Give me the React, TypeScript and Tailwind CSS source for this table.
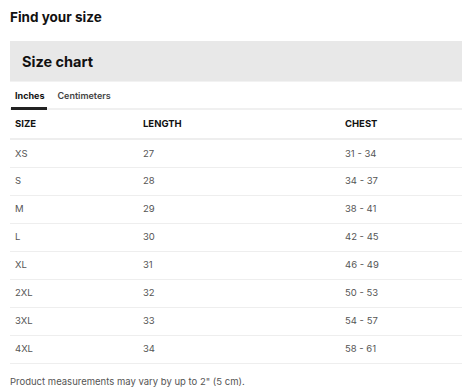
const rows = [
    ['XS', '27', '31 - 34'],
    ['S', '28', '34 - 37'],
    ['M', '29', '38 - 41'],
    ['L', '30', '42 - 45'],
    ['XL', '31', '46 - 49'],
    ['2XL', '32', '50 - 53'],
    ['3XL', '33', '54 - 57'],
    ['4XL', '34', '58 - 61'],
];

const App = () => {
    return (
        <div className="w-[462px] h-[390px] overflow-hidden bg-white pl-[10px] font-['Inter','Open_Sans',sans-serif] text-[#222]">
            <h2 className="pt-[8px] text-[13.5px] font-bold leading-[18px] text-[#111]">Find your size</h2>

            <div className="mt-[15px] w-[480px] h-[41px] bg-[#e8e8e8] flex items-center pl-[12px] border-b border-[#f2f2f2]">
                <h3 className="text-[14.5px] font-bold text-[#111] translate-y-[1px]">Size chart</h3>
            </div>

            <div className="w-[480px] flex gap-[8px] h-[28px] items-end border-b-2 border-[#f0f0f0]">
                <button className="relative px-[5px] pb-[6px] text-[9px] font-bold text-[#111]">
                    Inches
                    <span className="absolute left-[1px] right-[2px] -bottom-[2px] h-[3px] bg-[#222]" />
                </button>
                <button className="pb-[6px] text-[9px] font-semibold text-[#444]">Centimeters</button>
            </div>

            <table className="w-[480px] border-collapse text-[9.5px] table-fixed">
                <thead>
                    <tr className="h-[29px] border-b-2 border-[#eeeeee]">
                        <th className="w-[128px] pl-[5px] text-left font-bold text-[#111]">SIZE</th>
                        <th className="w-[202px] pl-[5px] text-left font-bold text-[#111]">LENGTH</th>
                        <th className="pl-[5px] text-left font-bold text-[#111]">CHEST</th>
                    </tr>
                </thead>
                <tbody>
                    {rows.map(([size, length, chest]) => (
                        <tr key={size} className="h-[28px] border-b border-[#eeeeee] text-[#555]">
                            <td className="pl-[5px] pt-[1px]">{size}</td>
                            <td className="pl-[5px] pt-[1px]">{length}</td>
                            <td className="pl-[5px] pt-[1px]">{chest}</td>
                        </tr>
                    ))}
                </tbody>
            </table>

            <p className="mt-[11px] text-[9.5px] text-[#555]">Product measurements may vary by up to 2" (5 cm).</p>
        </div>
    );
};

export default App;
